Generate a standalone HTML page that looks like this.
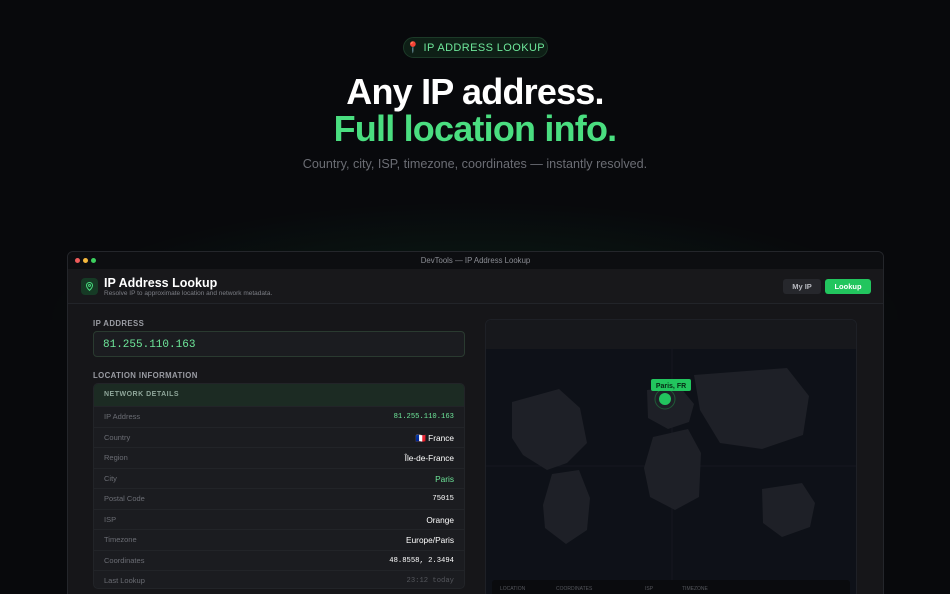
<!DOCTYPE html>
<html style="width:950px;height:594px;overflow:hidden"><head><meta charset="utf-8"><style>
*{margin:0;padding:0;box-sizing:border-box}
body{width:950px;height:594px;overflow:hidden;background:#08090c;font-family:"Liberation Sans",sans-serif;position:relative;color:#fff}
.glow{position:absolute;left:40px;top:200px;width:870px;height:120px;background:radial-gradient(ellipse at 50% 100%,rgba(34,197,94,.12),rgba(34,197,94,0) 70%)}
.badge{position:absolute;left:403px;top:37px;width:145px;height:21px;border-radius:11px;background:#0e1f16;border:1px solid #1c3a28;color:#6ee79a;font-size:11px;letter-spacing:.4px;text-align:center;line-height:20px}
h1{position:absolute;left:0;width:950px;text-align:center;font-size:36px;font-weight:700;letter-spacing:-.8px}
.sub{position:absolute;top:157px;width:950px;text-align:center;color:#6b6d74;font-size:12.6px}
.win{position:absolute;left:67px;top:251px;width:817px;height:343px;background:#161619;border:1px solid #24262b;border-bottom:none;border-radius:6px 6px 0 0;overflow:hidden}
.tb{height:17px;background:#0d0e11;position:relative;font-size:7.8px;color:#8a8c93;text-align:center;line-height:17px}
.dot{position:absolute;top:6px;width:5px;height:5px;border-radius:50%}
.hd{height:35px;border-bottom:1px solid #222429;background:#18181b;position:relative}
.ic{position:absolute;left:13px;top:9px;width:17px;height:17px;border-radius:4px;background:#163a25}
.t1{position:absolute;left:36px;top:7px;font-size:12.5px;font-weight:700}
.t2{position:absolute;left:36px;top:21px;font-size:6.5px;color:#7c7e85}
.btn{position:absolute;top:10px;height:15px;border-radius:3px;font-size:7.5px;font-weight:700;text-align:center;line-height:15px}
.lbl{position:absolute;font-size:7.8px;font-weight:700;color:#9a9ca3;letter-spacing:.4px}
.inp{position:absolute;left:93px;top:331px;width:372px;height:26px;border:1px solid #2a3a30;border-radius:4px;background:#1b1c20;font-family:"Liberation Mono",monospace;color:#6ee79a;font-size:11px;line-height:26px;padding-left:9px}
.tbl{position:absolute;left:93px;top:383px;width:372px;height:206px;border-radius:5px;background:#1b1c20;overflow:hidden;border:1px solid #222428}
.th{height:22px;background:#1c2b23;font-size:7px;font-weight:700;color:#8fa69a;letter-spacing:.5px;padding-left:10px;line-height:21px}
.r{height:20.5px;border-top:1px solid #222428;display:flex;justify-content:space-between;padding:0 10px;font-size:8.3px;line-height:20px}
.r span:first-child{color:#6b6d74;font-size:7.5px}
.m{font-family:"Liberation Mono",monospace;font-size:7.2px}
.map{position:absolute;left:485px;top:319px;width:372px;height:280px;border-radius:6px;background:#0e1118;overflow:hidden;border:1px solid #1e2026}
.mh{height:29px;background:#17181c}
</style></head><body>
<div class="glow"></div>
<div class="badge">📍 IP ADDRESS LOOKUP</div>
<h1 style="top:71px">Any IP address.</h1>
<h1 style="top:108px;color:#4ade80">Full location info.</h1>
<div class="sub">Country, city, ISP, timezone, coordinates — instantly resolved.</div>
<div class="win">
 <div class="tb"><span class="dot" style="left:7px;background:#ef5b5b"></span><span class="dot" style="left:15px;background:#f5b83d"></span><span class="dot" style="left:23px;background:#3ccf5e"></span>DevTools — IP Address Lookup</div>
 <div class="hd"><div class="ic"><svg width="17" height="17" viewBox="0 0 17 17"><path d="M8.5 4.5c-1.8 0-3 1.3-3 2.9 0 2.2 3 5 3 5s3-2.8 3-5c0-1.6-1.2-2.9-3-2.9z" fill="none" stroke="#4ade80" stroke-width="1"/><circle cx="8.5" cy="7.4" r="1" fill="none" stroke="#4ade80" stroke-width=".9"/></svg></div>
 <div class="t1">IP Address Lookup</div><div class="t2">Resolve IP to approximate location and network metadata.</div>
 <div class="btn" style="left:715px;width:38px;background:#26272c;color:#b8bac0">My IP</div>
 <div class="btn" style="left:757px;width:46px;background:#22c55e;color:#fff">Lookup</div></div>
</div>
<div class="lbl" style="left:93px;top:319px">IP ADDRESS</div>
<div class="inp">81.255.110.163</div>
<div class="lbl" style="left:93px;top:371px">LOCATION INFORMATION</div>
<div class="tbl"><div class="th">NETWORK DETAILS</div>
<div class="r"><span>IP Address</span><span class="m" style="color:#6ee79a">81.255.110.163</span></div>
<div class="r"><span>Country</span><span>🇫🇷 France</span></div>
<div class="r"><span>Region</span><span>Île-de-France</span></div>
<div class="r"><span>City</span><span style="color:#6ee79a">Paris</span></div>
<div class="r"><span>Postal Code</span><span class="m">75015</span></div>
<div class="r"><span>ISP</span><span>Orange</span></div>
<div class="r"><span>Timezone</span><span>Europe/Paris</span></div>
<div class="r"><span>Coordinates</span><span class="m">48.8558, 2.3494</span></div>
<div class="r"><span>Last Lookup</span><span class="m" style="color:#55575d">23:12 today</span></div>
</div>
<div class="map"><div class="mh"></div></div>
<svg style="position:absolute;left:0;top:0" width="950" height="594">
<line x1="672" y1="348" x2="672" y2="594" stroke="#151820"/><line x1="486" y1="466" x2="856" y2="466" stroke="#151820"/>
<g fill="#1e2027">
<polygon points="512,402 559,389 580,408 587,443 567,463 547,470 523,455 512,438"/>
<polygon points="552,474 579,470 590,498 587,530 566,544 545,528 543,505"/>
<polygon points="647,390 680,387 694,404 689,422 668,429 648,418"/>
<polygon points="653,437 688,429 701,453 699,497 675,510 650,497 644,468"/>
<polygon points="694,375 787,368 809,396 803,435 762,449 720,443 700,410"/>
<polygon points="762,489 802,483 815,503 810,527 782,537 763,523"/>
</g>
<circle cx="665" cy="399" r="10" fill="none" stroke="#1f5a36" stroke-width="1"/>
<circle cx="665" cy="399" r="6" fill="#22c55e"/>
<rect x="651" y="379" width="40" height="12" rx="2" fill="#22c55e"/>
<text x="671" y="388" font-size="7" font-weight="700" text-anchor="middle" fill="#062a14" font-family="Liberation Sans">Paris, FR</text>
<rect x="492" y="580" width="358" height="20" rx="3" fill="#0a0b0e"/>
<g font-size="5" fill="#55575d" font-family="Liberation Sans"><text x="500" y="590">LOCATION</text><text x="556" y="590">COORDINATES</text><text x="645" y="590">ISP</text><text x="682" y="590">TIMEZONE</text></g>
</svg>
</body></html>
